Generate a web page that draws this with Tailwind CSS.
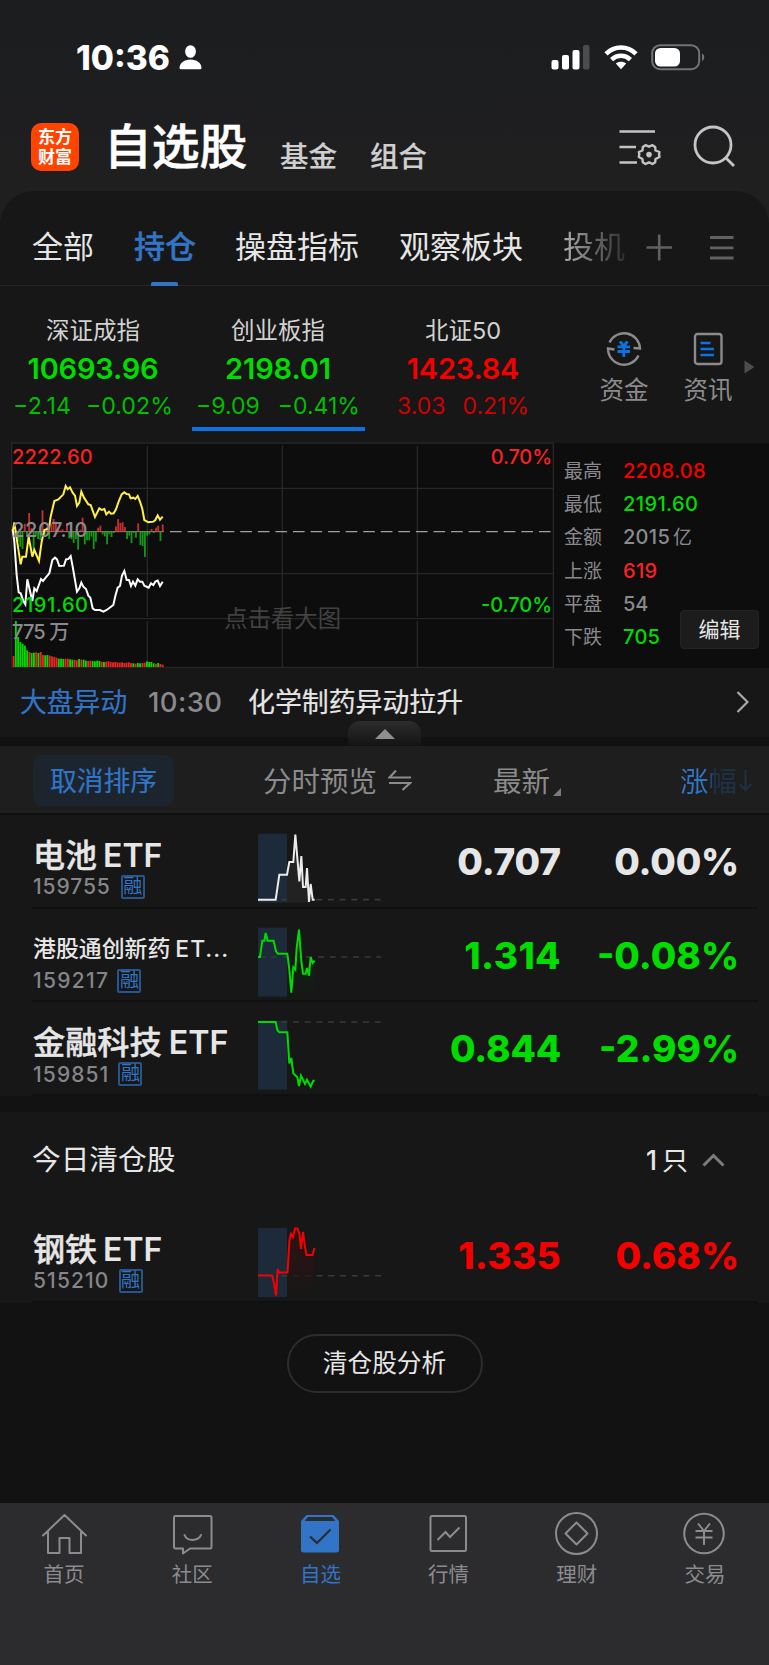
<!DOCTYPE html>
<html lang="zh-CN">
<head>
    <meta charset="UTF-8">
    <meta name="viewport" content="width=device-width, initial-scale=1.0">
    <title>自选股</title>
    <script src="https://cdn.jsdelivr.net/npm/@tailwindcss/browser@4"></script>
</head>
<body class="bg-[#121212] font-['Inter','Noto_Sans_CJK_SC',sans-serif] text-[#e6e6e6]">
<div class="w-[769px] h-[1665px] flex flex-col overflow-hidden whitespace-nowrap">

    <!-- status bar + title -->
    <header class="h-[192px] shrink-0 bg-linear-to-b from-[#1c1d1f] to-[#1f1f20]">
        <div class="h-[114px] pt-[37px] pl-[76px] pr-[64px] flex items-start">
            <div class="w-[95px] h-[42px] leading-[42px] text-[33.500px] font-extrabold text-white">10:36</div>
            <svg class="mt-[8px] ml-[8px]" width="23" height="25" viewBox="0 0 23 25" fill="#fff"><ellipse cx="11.5" cy="6.5" rx="5.4" ry="6.3"/><path d="M0.5 23C0.5 18 5.5 14.5 11.5 14.5S22.500 18 22.500 23Q22.500 24.300 21 24.300H2Q0.500 24.300 0.500 23Z"/></svg>
            <div class="ml-auto flex">
                <svg class="mt-[8px]" width="39" height="25" viewBox="0 0 39 25" fill="#fff"><rect x="0.500" y="15" width="7" height="9.500" rx="2"/><rect x="11" y="10" width="7" height="14.500" rx="2"/><rect x="21.500" y="5" width="7" height="19.500" rx="2"/><rect x="32" y="0" width="6.500" height="24.500" rx="2" fill="#4b4c4d"/></svg>
                <svg class="mt-[8px] ml-[14px]" width="34" height="25" viewBox="0 0 34 25" fill="none" stroke="#fff" stroke-width="4.600"><path d="M2 8.800C10.500 .4 23.500 .4 32 8.800"/><path d="M7.600 14.600C13 9.500 21 9.500 26.400 14.600"/><path d="M17 24.300L11.800 18.600C14.500 16 19.500 16 22.200 18.600Z" fill="#fff" stroke="none"/></svg>
                <svg class="mt-[7px] ml-[13px]" width="54" height="27" viewBox="0 0 54 27"><rect x="1.200" y="1.200" width="47" height="24" rx="8" fill="none" stroke="#737476" stroke-width="2"/><rect x="4" y="4" width="25" height="18.500" rx="5.500" fill="#fff"/><path d="M51 9.500C54 11 54 15.500 51 17Z" fill="#737476"/></svg>
            </div>
        </div>
        <div class="h-[66px] pl-[31px] flex items-start">
            <div class="mt-[9px] w-[48px] h-[48px] rounded-[10px] bg-[#ff4400] text-white text-[17px] pt-[3px] flex flex-col items-center font-bold font-['Noto_Sans_CJK_SC',sans-serif]"><span class="h-[20px] leading-[20px]">东方</span><span class="h-[20px] leading-[20px]">财富</span></div>
            <h1 class="ml-[25px] mt-[5px] w-[151px] text-[47.800px] leading-[56px] h-[56px] font-medium text-white [-webkit-text-stroke:0.6px_#fff]">自选股</h1>
            <div class="ml-[25px] mt-[23px] text-[28.500px] leading-[40px] font-medium text-[#cfcfcf] [-webkit-text-stroke:0.2px_#cfcfcf]">基金</div>
            <div class="ml-[33px] mt-[23px] text-[28.500px] leading-[40px] font-medium text-[#cfcfcf] [-webkit-text-stroke:0.2px_#cfcfcf]">组合</div>
            <svg class="ml-auto mt-[14px]" width="43" height="40" viewBox="0 0 43 40" fill="none" stroke="#c4c4c4" stroke-width="2.700"><path d="M0.500 3.500H36M0.500 19H17M0.500 34.500H18"/><path d="M26.500 17.200L30 18.700L33.500 17.200L36.200 19L36.500 22.500L40.500 24L40 26.300L40.500 29L36.500 31L36.200 34.200L33.500 36L30 34.300L26.500 36L23.800 34.200L23.500 31L19.800 29L20.300 26.300L19.800 24L23.500 22.500L23.800 19Z" stroke-linejoin="round" stroke-width="2.400"/><circle cx="30" cy="26.600" r="2.800" fill="#c4c4c4" stroke="none"/></svg>
            <svg class="ml-[31px] mr-[33px] mt-[11px]" width="43" height="43" viewBox="0 0 43 43" fill="none" stroke="#c4c4c4" stroke-width="2.800"><circle cx="20" cy="20" r="18"/><path d="M33 33L41 41"/></svg>
        </div>
    </header>

    <div class="-mt-px shrink-0 bg-[#1f1f20]">
        <div class="bg-[#171717] rounded-t-[34px] h-[95px] flex border-b border-[#262626] text-[31px] leading-[44px]">
            <div class="pl-[32px] pt-[34px] w-[134px]">全部</div>
            <div class="pt-[34px] w-[101px] font-medium text-[#3274c6] [-webkit-text-stroke:0.4px_#3274c6]">持仓
                <div class="mt-[13px] ml-[17px] w-[27px] h-[4px] rounded-t-[2px] bg-[#3274c6]"></div>
            </div>
            <div class="pt-[34px] w-[164px]">操盘指标</div>
            <div class="pt-[34px] w-[164px]">观察板块</div>
            <div class="pt-[34px] w-[62px] h-[80px] bg-linear-to-r from-[#b0b0b0] to-[#303030] bg-clip-text text-transparent">投机</div>
            <svg class="ml-[21px] mt-[43px]" width="27" height="27" viewBox="0 0 27 27" stroke="#616161" stroke-width="2.600"><path d="M0.500 13.500H26M13.200 0.500V26.500"/></svg>
            <svg class="ml-[36px] mt-[44px]" width="26" height="26" viewBox="0 0 26 26" stroke="#616161" stroke-width="2.800"><path d="M1 2.500H24.500M1 12.800H24.500M1 23H24.500"/></svg>
        </div>
    </div>

    <!-- indices -->
    <section class="shrink-0 h-[156px] bg-[#171717] flex text-center">
        <div class="w-[186px]">
            <div class="mt-[28px] text-[23.500px] leading-[34px] text-[#d2d2d2]">深证成指</div>
            <div class="mt-[2px] text-[29px] leading-[38px] font-semibold tracking-[-0.200px] text-[#00dc00]">10693.96</div>
            <div class="flex justify-center gap-[15px] text-[23.200px] leading-[36px] text-[#00be00]"><span>−2.14</span><span>−0.02%</span></div>
        </div>
        <div class="w-[184px]">
            <div class="mt-[28px] text-[23.500px] leading-[34px] text-[#d2d2d2]">创业板指</div>
            <div class="mt-[2px] text-[29px] leading-[38px] font-semibold tracking-[-0.100px] text-[#00dc00]">2198.01</div>
            <div class="flex justify-center gap-[18px] text-[23px] leading-[36px] text-[#00be00]"><span>−9.09</span><span>−0.41%</span></div>
            <div class="ml-[6px] mt-[3px] w-[173px] h-[4px] bg-[#0b72e0]"></div>
        </div>
        <div class="w-[186px]">
            <div class="mt-[28px] text-[23.500px] leading-[34px] text-[#d2d2d2]">北证50</div>
            <div class="mt-[2px] text-[29px] leading-[38px] font-semibold tracking-[-0.200px] text-[#f50000]">1423.84</div>
            <div class="flex justify-center gap-[17px] text-[23px] leading-[36px] text-[#d20000]"><span>3.03</span><span>0.21%</span></div>
        </div>
        <div class="ml-[31px] w-[74px] flex flex-col items-center text-[24.500px] leading-[36px] text-[#8b8b8b]">
            <svg class="mt-[45px]" width="36" height="36" viewBox="0 0 36 36" fill="none" stroke="#8b8b8b" stroke-width="2.400"><path d="M3.500 11.500A16 16 0 0 1 34 17.500L27.500 17M32.500 24.500A16 16 0 0 1 2 17.500L8.500 18.500"/><path d="M14 10.500L17.800 15L21.500 10.500M11.500 15.800H24M11.500 20.500H24M17.800 15V26" stroke="#0b72e0" stroke-width="2.800"/></svg>
            <span class="mt-[5px]">资金</span>
        </div>
        <div class="ml-[11px] w-[72px] flex flex-col items-center text-[24.500px] leading-[36px] text-[#8b8b8b]">
            <svg class="mt-[46px]" width="30" height="34" viewBox="0 0 30 34" fill="none"><rect x="2" y="2" width="26.500" height="30" rx="2.500" stroke="#8b8b8b" stroke-width="2.400"/><path d="M7.500 11H17.500M7.500 17H21M7.500 23H21" stroke="#0b72e0" stroke-width="2.600"/></svg>
            <span class="mt-[6px]">资讯</span>
        </div>
        <svg class="mt-[74px]" width="11" height="14" viewBox="0 0 11 14" fill="#4c4c4c"><path d="M0.500 0.500L10.500 7L0.500 13.500Z"/></svg>
    </section>

    <!-- intraday chart -->
    <section class="shrink-0 h-[226px] bg-[#171717] flex">
        <svg width="554" height="226" viewBox="0 21 1662 678" class="shrink-0">
            <rect x="34" y="24" width="1628" height="672" fill="#0d0d0d"/>
            <g stroke="#272727" stroke-width="4" fill="none">
                <path d="M34 24H1662M34 160H1662M34 416H1662M34 551H1662M34 697H1662M35 24V697M442 32V545M442 558V697M847 32V545M847 558V697M1252 32V545M1252 558V697M1660 24V697"/>
            </g>
            <path d="M38 290H492" stroke="#8a8a8e" stroke-width="3"/>
            <path d="M510 290H1654" stroke="#a0a0a4" stroke-width="4" stroke-dasharray="35 17.700"/>
            <text x="673" y="577" font-size="70" fill="#414141">点击看大图</text>
            <g id="flow" opacity="0.85"></g>
            <g id="volume"></g>
            <polyline fill="none" stroke="#fff" stroke-width="6" points="38,282 43,320 50,420 56,472 62,475 70,498 76,508 82,433 90,468 97,498 103,460 110,468 123,432 129,438 137,428 148,415 157,375 165,368 171,373 178,393 192,392 198,373 205,372 212,363 218,395 231,470 238,460 244,443 250,455 258,462 265,482 271,488 278,520 285,525 300,525 310,530 320,525 340,510 346,483 353,458 360,453 366,422 373,408 380,435 387,435 393,453 399,440 406,452 413,433 420,440 427,440 433,452 446,458 453,445 460,450 466,440 473,437 480,453 488,440"/>
            <polyline fill="none" stroke="#fff04a" stroke-width="6" points="38,290 43,262 50,310 62,388 67,365 78,365 86,305 97,365 103,345 117,378 125,320 133,285 147,280 152,245 163,198 175,193 190,178 197,153 203,163 210,157 218,173 225,182 231,213 238,203 244,170 252,188 265,208 272,210 285,246 298,220 305,225 313,222 319,238 327,230 333,236 341,235 348,223 355,202 365,178 373,172 380,177 387,178 392,190 400,188 406,192 413,183 420,200 427,222 433,255 445,262 460,260 466,255 473,241 480,254 488,245"/>
            <g font-size="60" font-weight="500">
                <text x="36" y="86" fill="#f72323" textLength="242">2222.60</text>
                <text x="36" y="307" fill="#8a8a8e" textLength="226">2207.10</text>
                <text x="36" y="530" fill="#00dc00" textLength="228">2191.60</text>
                <text x="36" y="613" fill="#8a8a8e" textLength="172">775 万</text>
                <text x="1656" y="86" fill="#f72323" text-anchor="end" textLength="184">0.70%</text>
                <text x="1656" y="530" fill="#00dc00" text-anchor="end" textLength="213">-0.70%</text>
            </g>
        </svg>
        <div class="relative w-[215px] mt-px bg-[#0d0d0d] pt-[12px] pl-[10px] text-[19px] leading-[33.200px] text-[#8a8a8e]">
            <div class="flex"><span class="w-[59px]">最高</span><span class="text-[20px] font-medium text-[#f50000] tracking-[0.300px]">2208.08</span></div>
            <div class="flex"><span class="w-[59px]">最低</span><span class="text-[20px] font-medium text-[#00dc00] tracking-[0.400px]">2191.60</span></div>
            <div class="flex"><span class="w-[59px]">金额</span><span class="text-[20px] font-medium tracking-[0.300px]">2015<span class="ml-[3px] text-[19px] font-normal">亿</span></span></div>
            <div class="flex"><span class="w-[59px]">上涨</span><span class="text-[20px] font-medium text-[#f72323] tracking-[0.300px]">619</span></div>
            <div class="flex"><span class="w-[59px]">平盘</span><span class="text-[20px] font-medium">54</span></div>
            <div class="flex"><span class="w-[59px]">下跌</span><span class="text-[20px] font-medium text-[#00dc00] tracking-[0.300px]">705</span></div>
            <button class="absolute left-[126px] top-[167px] w-[79px] h-[39px] rounded-[4px] border border-[#242424] bg-[#1c1c1c] text-[21px] leading-[36px] font-normal text-[#e6e6e6]">编辑</button>
        </div>
    </section>

    <!-- market news -->
    <section class="relative shrink-0 h-[78px] bg-linear-to-b from-[#171717] from-[69px] to-[#111111] to-[69px] flex leading-[40px] pt-[14px]">
        <span class="ml-[20px] text-[26.800px] text-[#3274c6] w-[128px] [-webkit-text-stroke:0.2px_#3274c6]">大盘异动</span>
        <span class="text-[27.500px] font-medium text-[#8a8a8e] w-[100px] tracking-[0.400px]">10:30</span>
        <span class="text-[26.900px] [-webkit-text-stroke:0.2px_#e6e6e6]">化学制药异动拉升</span>
        <svg class="ml-auto mr-[20px] mt-[9px]" width="13" height="22" viewBox="0 0 13 22" fill="none" stroke="#a8a8a8" stroke-width="2.200"><path d="M1.500 1L11.500 11L1.500 21"/></svg>
        <div class="absolute left-[348px] top-[53px] w-[73px] h-[24px] rounded-t-[12px] bg-linear-to-b from-[#2c2c2c] to-[#151515] flex justify-center">
            <svg class="mt-[8px]" width="20" height="10" viewBox="0 0 20 10" fill="#8f8f8f"><path d="M10 0L20 10H0Z"/></svg>
        </div>
    </section>

    <!-- table head -->
    <div class="shrink-0 h-[69px] bg-[#1e1e1e] border-b-2 border-[#101010] flex leading-[40px] text-[28.500px] text-[#8b8b8b]">
        <div class="ml-[33px] mt-[9px] w-[141px] h-[51px] rounded-[9px] bg-[#1c252e] text-center text-[26.800px] leading-[52px] text-[#3274c6] [-webkit-text-stroke:0.2px_#3274c6]">取消排序</div>
        <span class="ml-[89px] mt-[16px]">分时预览</span>
        <svg class="ml-[11px] mt-[24px]" width="24" height="21" viewBox="0 0 24 21" fill="none" stroke="#8b8b8b" stroke-width="2.200"><path d="M8 0.500L1.500 7.500H23M1 13H22L14.500 20"/></svg>
        <span class="ml-[81px] mt-[16px]">最新</span>
        <svg class="ml-[3px] mt-[42px]" width="8" height="8" viewBox="0 0 8 8" fill="#7c7c7c"><path d="M8 0V8H0Z"/></svg>
        <span class="ml-[119px] mt-[16px] bg-linear-to-r from-[#3274c6] from-45% to-[#1e3147] to-60% bg-clip-text text-transparent">涨幅</span>
        <svg class="mt-[24px] ml-px" width="15" height="22" viewBox="0 0 15 22" fill="none" stroke="#20303f" stroke-width="2.200"><path d="M7.500 0V20M1.500 14L7.500 20L13.500 14"/></svg>
    </div>

    <!-- holdings -->
    <section class="shrink-0 bg-[#171717]">
        <div class="ml-[32px] mr-[11px] h-[93.700px] border-b-2 border-[#101010] flex">
            <div class="w-[226px] pt-[20px] pl-px">
                <div class="h-[42px] text-[32px] leading-[42px] font-semibold"><span class="font-medium [-webkit-text-stroke:0.4px_#e6e6e6]">电池</span><span class="ml-[6px]">ETF</span></div>
                <div class="flex gap-[10px] items-center h-[20px] text-[21px] font-medium text-[#85858a] tracking-[0.900px]"><span>159755</span><span class="w-[24px] h-[24px] rounded-[2px] border-2 border-[#28558b] text-[19px] leading-[20px] font-normal text-[#3274c6] tracking-normal flex justify-center">融</span></div>
            </div>
            <svg class="mt-[17px] -ml-px mr-px" width="124" height="72" viewBox="771 52 372 216" fill="none">
                <rect x="774" y="57" width="87" height="207" fill="#1c2a3a"/>
                <path d="M844 255H1144" stroke="#3a3a3a" stroke-width="5" stroke-dasharray="18 17"/>
                <path d="M861 180L868 142H880L886 60L898 200L904 130L908 217H916L921 165L927 262V264H861Z" fill="#222222"/>
                <polyline stroke="#ececec" stroke-width="6" points="774,255 827,255 838,180 861,180 868,142 880,142 886,60 898,200 904,124 909,217 917,217 921,160 927,262 932,208 938,255 944,255"/>
            </svg>
            <div class="w-[179px] pt-[25px] text-right text-[37px] leading-[44px] font-extrabold tracking-[-0.100px]">0.707</div>
            <div class="w-[178px] pt-[25px] text-right text-[37px] leading-[44px] font-extrabold tracking-[-0.200px]">0.00%</div>
        </div>
        <div class="ml-[32px] mr-[11px] h-[93.700px] border-b-2 border-[#101010] flex">
            <div class="w-[226px] pt-[20px] pl-px">
                <div class="h-[42px] text-[22.900px] leading-[40px] font-medium">港股通创新药<span class="ml-[5px] tracking-[1px]">ET...</span></div>
                <div class="flex gap-[8px] items-center h-[20px] text-[21px] font-medium text-[#85858a] tracking-[1.300px]"><span>159217</span><span class="w-[24px] h-[24px] rounded-[2px] border-2 border-[#28558b] text-[19px] leading-[20px] font-normal text-[#3274c6] tracking-normal flex justify-center">融</span></div>
            </div>
            <svg class="mt-[17px] -ml-px mr-px" width="124" height="72" viewBox="771 334 372 216" fill="none">
                <defs><linearGradient id="down" x1="0" y1="0" x2="0" y2="1"><stop offset="0" stop-color="#0a3a0a"/><stop offset="1" stop-color="#171717"/></linearGradient></defs>
                <rect x="774" y="339" width="87" height="207" fill="#1c2a3a"/>
                <path d="M779 427H1144" stroke="#3a3a3a" stroke-width="5" stroke-dasharray="18 17"/>
                <path d="M861 417L873 534L880 458L886 465L897 345L909 477L917 477L932 430L944 438V545H861Z" fill="url(#down)" opacity="0.5"/>
                <polyline stroke="#00dc00" stroke-width="6" points="774,427 780,427 787,378 793,378 797,355 803,378 821,378 828,410 834,417 862,417 868,465 874,534 880,458 886,465 890,400 897,345 904,440 909,477 917,477 921,460 927,483 932,427 938,445 944,438"/>
            </svg>
            <div class="w-[179px] pt-[25px] text-right text-[37px] leading-[44px] font-extrabold tracking-[0.400px] text-[#00dc00]">1.314</div>
            <div class="w-[178px] pt-[25px] text-right text-[37px] leading-[44px] font-extrabold text-[#00dc00]">-0.08%</div>
        </div>
        <div class="ml-[32px] mr-[11px] h-[93.700px] border-b-2 border-[#101010] flex">
            <div class="w-[226px] pt-[20px] pl-px">
                <div class="h-[42px] text-[32.200px] leading-[42px] font-semibold"><span class="font-medium [-webkit-text-stroke:0.4px_#e6e6e6]">金融科技</span><span class="ml-[7px]">ETF</span></div>
                <div class="flex gap-[9px] items-center h-[20px] text-[21px] font-medium text-[#85858a] tracking-[1.100px]"><span>159851</span><span class="w-[24px] h-[24px] rounded-[2px] border-2 border-[#28558b] text-[19px] leading-[20px] font-normal text-[#3274c6] tracking-normal flex justify-center">融</span></div>
            </div>
            <svg class="mt-[17px] -ml-px mr-px" width="124" height="72" viewBox="771 615 372 216" fill="none">
                <rect x="774" y="620" width="87" height="207" fill="#1c2a3a"/>
                <path d="M844 624H1144" stroke="#3a3a3a" stroke-width="5" stroke-dasharray="18 17"/>
                <polyline stroke="#00dc00" stroke-width="6" points="774,624 827,624 832,648 838,655 862,655 868,748 874,732 880,778 892,790 897,816 903,785 915,810 921,797 932,818 940,800 944,800"/>
            </svg>
            <div class="w-[179px] pt-[25px] text-right text-[37px] leading-[44px] font-extrabold tracking-[-0.200px] text-[#00dc00]">0.844</div>
            <div class="w-[178px] pt-[25px] text-right text-[37px] leading-[44px] font-extrabold text-[#00dc00]">-2.99%</div>
        </div>
    </section>

    <!-- closed today -->
    <section class="mt-[16px] shrink-0 h-[191px] bg-[#171717]">
        <div class="h-[95px] pl-[32px] pr-[44px] pt-px flex items-center text-[28.700px] leading-[40px]">
            <span>今日清仓股</span>
            <span class="ml-auto text-[26.500px] font-medium">1<span class="ml-[5px] text-[26px] font-normal">只</span></span>
            <svg class="ml-[14px]" width="23" height="14" viewBox="0 0 23 14" fill="none" stroke="#7c7c7c" stroke-width="3"><path d="M1.500 12.500L11.500 2.500L21.500 12.500"/></svg>
        </div>
        <div class="ml-[32px] mr-[11px] h-[96px] border-b-2 border-[#101010] flex">
            <div class="w-[226px] pt-[22px] pl-px">
                <div class="h-[42px] text-[32px] leading-[42px] font-semibold"><span class="font-medium [-webkit-text-stroke:0.4px_#e6e6e6]">钢铁</span><span class="ml-[6px]">ETF</span></div>
                <div class="flex gap-[9px] items-center h-[20px] text-[21px] font-medium text-[#85858a] tracking-[1.100px]"><span>515210</span><span class="w-[24px] h-[24px] rounded-[2px] border-2 border-[#28558b] text-[19px] leading-[20px] font-normal text-[#3274c6] tracking-normal flex justify-center">融</span></div>
            </div>
            <svg class="mt-[19px]" width="124" height="72" viewBox="0 0 124 72" fill="none">
                <defs><linearGradient id="up" x1="0" y1="0" x2="0" y2="1"><stop offset="0" stop-color="#3a0f0f"/><stop offset="1" stop-color="#171717"/></linearGradient></defs>
                <rect x="0" y="2" width="29" height="69" fill="#1c2a3a"/>
                <path d="M23.500 49.700H124" stroke="#3a3a3a" stroke-width="1.600" stroke-dasharray="6 5.700"/>
                <path d="M29 45L33 7L38 2L48 28L56 28V71H29Z" fill="url(#up)" opacity="0.7"/>
                <polyline stroke="#f50000" stroke-width="2" points="0,49.500 14,49.500 16,57 18,69.500 19.700,43 21,46.500 29.500,46.500 31.500,14 33,8 35,11 37,2.500 39.500,2.500 41.500,8 43,23 45,6 47,21 48.500,29 54.500,29 56.500,22"/>
            </svg>
            <div class="w-[179px] pt-[27px] text-right text-[37px] leading-[44px] font-extrabold tracking-[0.300px] text-[#f50000]">1.335</div>
            <div class="w-[178px] pt-[27px] text-right text-[37px] leading-[44px] font-extrabold text-[#f50000]">0.68%</div>
        </div>
    </section>

    <div class="shrink-0 flex justify-center pt-[31px]">
        <button class="w-[196px] h-[59px] rounded-full border-2 border-[#2c2c2c] text-[24.700px] leading-[55px] text-center">清仓股分析</button>
    </div>

    <!-- tab bar -->
    <nav class="mt-auto shrink-0 h-[162px] bg-[#2c2c2e] grid grid-cols-6 text-[20.500px] leading-[30px] text-[#8b8b90] pt-[8px]">
        <div class="flex flex-col items-center"><svg width="46" height="46" viewBox="0 0 46 46" fill="none" stroke="#8b8b90" stroke-width="2" stroke-linecap="round" stroke-linejoin="round"><path d="M2 24.500L23.500 4L45 24.500M7 20.500V42H18.500V27H28.500V42H40V20.500"/></svg><span class="mt-[3px]">首页</span></div>
        <div class="flex flex-col items-center"><svg width="46" height="46" viewBox="0 0 46 46" fill="none" stroke="#8b8b90" stroke-width="2" stroke-linecap="round" stroke-linejoin="round"><path d="M6 5H41Q42.500 5 42.500 6.500V36Q42.500 37.500 41 37.500H21L14 42.500V37.500H6.500Q5 37.500 5 36V6.500Q5 5 6 5Z"/><path d="M15.500 24C18 30.500 29 30.500 32 24"/></svg><span class="mt-[3px]">社区</span></div>
        <div class="flex flex-col items-center text-[#3274c6]"><svg width="46" height="46" viewBox="0 0 46 46"><path d="M9.500 4H36.500L41.500 9.500Q42 10 42 11V39Q42 41.500 39.500 41.500H6.500Q4 41.500 4 39V11Q4 10 4.500 9.500Z" fill="#3274c6"/><path d="M11 6H35L38.500 10H7.500Z" fill="#2c2c2e"/><path d="M13 25.500L20 32L33.500 18.500" fill="none" stroke="#2c2c2e" stroke-width="2.200"/></svg><span class="mt-[3px]">自选</span></div>
        <div class="flex flex-col items-center"><svg width="46" height="46" viewBox="0 0 46 46" fill="none" stroke="#8b8b90" stroke-width="2"><rect x="4.500" y="5" width="35.500" height="35" rx="1.500"/><path d="M11.500 29L19.500 21L24 26L33.500 16.500"/></svg><span class="mt-[3px]">行情</span></div>
        <div class="flex flex-col items-center"><svg width="46" height="46" viewBox="0 0 46 46" fill="none" stroke="#8b8b90" stroke-width="2"><circle cx="22.500" cy="22.500" r="20.500"/><path d="M22.500 11.500L33.500 22.500L22.500 33.500L11.500 22.500Z" stroke-linejoin="round"/></svg><span class="mt-[3px]">理财</span></div>
        <div class="flex flex-col items-center"><svg width="46" height="46" viewBox="0 0 46 46" fill="none" stroke="#8b8b90" stroke-width="2"><circle cx="22" cy="22.500" r="19.800"/><path d="M16 12.500L22 20L28 12.500M13.500 20H30.500M13.500 26.500H30.500M22 20V34"/></svg><span class="mt-[3px]">交易</span></div>
    </nav>
</div>

<script>
    // net flow per bar: above zero is red, below is green
    const flow = [-5, -12, -30, -45, -52, 24, -14, 56, 10, -60, -12, -22, -25, 64, -14, 14, -22, 24, 38, 30, 6, 4, 7, 2, 26, -20, -22, -34, -22, -54, 6, 42, -38, -26, -26, -15, -52, -30, 12, 18, -8, -14, -38, -8, -16, -4, 16, 38, 26, 28, 14, -22, -12, -34, -4, -18, 25, -40, -43, -76, -12, -8, 8, -4, 12, 18, -28, 22];
    // volume heights with r/g for each bar
    const volume = [33, 138, 90, 75, 70, 64, 50, 45, 42, 43, 44, 42, 45, 36, 35, 36, 34, 32, 30, 28, 25, 25, 24, 25, 25, 23, 22, 21, 20, 24, 22, 22, 19, 18, 19, 18, 17, 19, 18, 16, 15, 16, 17, 15, 14, 15, 14, 13, 14, 12, 13, 14, 12, 11, 10, 12, 11, 12, 13, 17, 15, 15, 11, 10, 12, 9, 7];
    const tones = 'rggggggrggrgrrggrrrrgggrrggrrgrggrrggggrgrrrrrrrrrrrrgrggrrggggrgrrr';

    function bars(id, list, draw) {
        const step = 454 / list.length;
        document.getElementById(id).innerHTML = list.map((v, i) => {
            const b = draw(v, i);
            return `<rect x="${38 + i * step}" y="${b.y}" width="${step - 1.2}" height="${b.h}" fill="${b.fill}"/>`;
        }).join('');
    }

    bars('flow', flow, v => ({ y: v > 0 ? 290 - v : 290, h: Math.abs(v), fill: v > 0 ? '#e83434' : '#16b016' }));
    bars('volume', volume, (v, i) => ({ y: 696 - v, h: v, fill: tones[i] === 'r' ? '#f02323' : '#00dc00' }));
</script>
</body>
</html>
